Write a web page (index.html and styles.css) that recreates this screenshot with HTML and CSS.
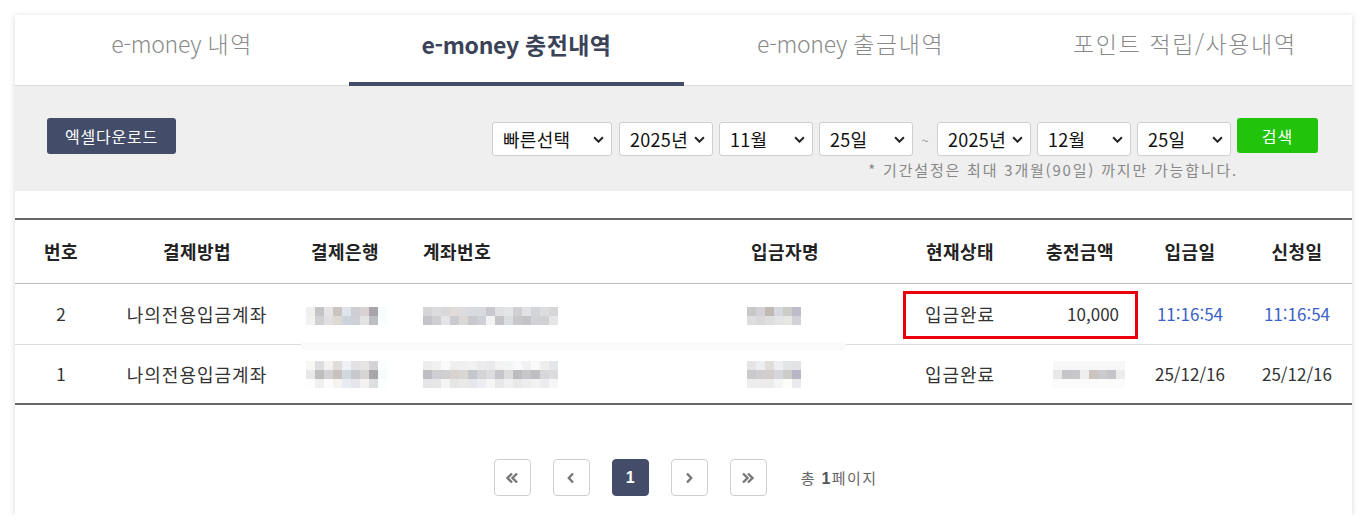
FILE: index.html
```html
<!DOCTYPE html>
<html lang="ko">
<head>
<meta charset="utf-8">
<title>e-money 충전내역</title>
<link rel="stylesheet" href="styles.css">
</head>
<body>
<div class="card">
  <nav class="tabs">
    <a class="tab">e-money <span class="ko">내역</span></a>
    <a class="tab active">e-money <span class="ko">충전내역</span></a>
    <a class="tab">e-money <span class="ko">출금내역</span></a>
    <a class="tab"><span class="ko">포인트 적립/사용내역</span></a>
  </nav>

  <section class="filter">
    <button class="btn-excel">엑셀다운로드</button>
    <div class="filter-right">
      <div class="date-row">
        <span class="sel w120"><select><option>빠른선택</option></select><svg class="chev" viewBox="0 0 10 6"><path d="M1 1l4 4 4-4" fill="none" stroke="#222" stroke-width="1.8"/></svg></span>
        <span class="sel"><select><option>2025년</option></select><svg class="chev" viewBox="0 0 10 6"><path d="M1 1l4 4 4-4" fill="none" stroke="#222" stroke-width="1.8"/></svg></span>
        <span class="sel"><select><option>11월</option></select><svg class="chev" viewBox="0 0 10 6"><path d="M1 1l4 4 4-4" fill="none" stroke="#222" stroke-width="1.8"/></svg></span>
        <span class="sel"><select><option>25일</option></select><svg class="chev" viewBox="0 0 10 6"><path d="M1 1l4 4 4-4" fill="none" stroke="#222" stroke-width="1.8"/></svg></span>
        <span class="tilde">~</span>
        <span class="sel"><select><option>2025년</option></select><svg class="chev" viewBox="0 0 10 6"><path d="M1 1l4 4 4-4" fill="none" stroke="#222" stroke-width="1.8"/></svg></span>
        <span class="sel"><select><option>12월</option></select><svg class="chev" viewBox="0 0 10 6"><path d="M1 1l4 4 4-4" fill="none" stroke="#222" stroke-width="1.8"/></svg></span>
        <span class="sel"><select><option>25일</option></select><svg class="chev" viewBox="0 0 10 6"><path d="M1 1l4 4 4-4" fill="none" stroke="#222" stroke-width="1.8"/></svg></span>
        <button class="btn-search">검색</button>
      </div>
      <p class="note">* 기간설정은 최대 3개월(90일) 까지만 가능합니다.</p>
    </div>
  </section>

  <div class="table-wrap">
    <table class="list">
      <colgroup>
        <col class="c1"><col class="c2"><col class="c3"><col class="c4"><col class="c5"><col class="c6"><col class="c7"><col class="c8"><col class="c9">
      </colgroup>
      <thead>
        <tr>
          <th>번호</th><th>결제방법</th><th>결제은행</th><th class="left">계좌번호</th><th>입금자명</th><th class="st">현재상태</th><th class="amt-h">충전금액</th><th>입금일</th><th class="last">신청일</th>
        </tr>
      </thead>
      <tbody>
        <tr>
          <td class="num">2</td>
          <td class="ko">나의전용입금계좌</td>
          <td class="mos-bank">
            <svg width="81" height="18" viewBox="0 0 81 18"><g>
              <rect x="0" y="0" width="9" height="9" fill="#f0efee"/><rect x="9" y="0" width="9" height="9" fill="#c4c3c6"/><rect x="18" y="0" width="9" height="9" fill="#e4e4e6"/><rect x="27" y="0" width="9" height="9" fill="#c9c4c0"/><rect x="36" y="0" width="9" height="9" fill="#dfe4ec"/><rect x="45" y="0" width="9" height="9" fill="#cdcdd2"/><rect x="54" y="0" width="9" height="9" fill="#d6d3d2"/><rect x="63" y="0" width="9" height="9" fill="#a9a4ab"/><rect x="72" y="0" width="9" height="9" fill="#f7fdfd"/>
              <rect x="0" y="9" width="9" height="9" fill="#f2f2f2"/><rect x="9" y="9" width="9" height="9" fill="#d0cfd1"/><rect x="18" y="9" width="9" height="9" fill="#e0e0e2"/><rect x="27" y="9" width="9" height="9" fill="#ddd8d0"/><rect x="36" y="9" width="9" height="9" fill="#ccd3dc"/><rect x="45" y="9" width="9" height="9" fill="#cfd0d5"/><rect x="54" y="9" width="9" height="9" fill="#e4e3e3"/><rect x="63" y="9" width="9" height="9" fill="#bebdc2"/><rect x="72" y="9" width="9" height="9" fill="#f8fdfd"/>
            </g></svg>
          </td>
          <td class="left mos-acc">
            <svg width="135" height="18" viewBox="0 0 135 18"><g>
              <rect x="0" y="0" width="9" height="9" fill="#d6d6d8"/><rect x="9" y="0" width="9" height="9" fill="#dcdcde"/><rect x="18" y="0" width="9" height="9" fill="#d8d8da"/><rect x="27" y="0" width="9" height="9" fill="#e1dcd9"/><rect x="36" y="0" width="9" height="9" fill="#dcdcde"/><rect x="45" y="0" width="9" height="9" fill="#d8dadd"/><rect x="54" y="0" width="9" height="9" fill="#d9dadd"/><rect x="63" y="0" width="9" height="9" fill="#c9c9cd"/><rect x="72" y="0" width="9" height="9" fill="#dfe0e2"/><rect x="81" y="0" width="9" height="9" fill="#e3e5e6"/><rect x="90" y="0" width="9" height="9" fill="#d0d0d3"/><rect x="99" y="0" width="9" height="9" fill="#e1e2e5"/><rect x="108" y="0" width="9" height="9" fill="#d3d4d7"/><rect x="117" y="0" width="9" height="9" fill="#dcdddf"/><rect x="126" y="0" width="9" height="9" fill="#d6d6d8"/>
              <rect x="0" y="9" width="9" height="9" fill="#c4c3c8"/><rect x="9" y="9" width="9" height="9" fill="#cfced2"/><rect x="18" y="9" width="9" height="9" fill="#e4e4e6"/><rect x="27" y="9" width="9" height="9" fill="#cbcbcf"/><rect x="36" y="9" width="9" height="9" fill="#dcd8d6"/><rect x="45" y="9" width="9" height="9" fill="#c8c8cd"/><rect x="54" y="9" width="9" height="9" fill="#cfd0d5"/><rect x="63" y="9" width="9" height="9" fill="#f3f3f3"/><rect x="72" y="9" width="9" height="9" fill="#c4c4c8"/><rect x="81" y="9" width="9" height="9" fill="#dcdde0"/><rect x="90" y="9" width="9" height="9" fill="#c9c9cc"/><rect x="99" y="9" width="9" height="9" fill="#c3c3c8"/><rect x="108" y="9" width="9" height="9" fill="#d1d2d6"/><rect x="117" y="9" width="9" height="9" fill="#d1d1d4"/><rect x="126" y="9" width="9" height="9" fill="#e5e5e7"/>
            </g></svg>
          </td>
          <td class="mos-name">
            <svg width="54" height="18" viewBox="0 0 54 18"><g>
              <rect x="0" y="0" width="9" height="9" fill="#cac7c8"/><rect x="9" y="0" width="9" height="9" fill="#d2d2d6"/><rect x="18" y="0" width="9" height="9" fill="#bfb8b3"/><rect x="27" y="0" width="9" height="9" fill="#d5d9df"/><rect x="36" y="0" width="9" height="9" fill="#cbccc8"/><rect x="45" y="0" width="9" height="9" fill="#bebcc8"/>
              <rect x="0" y="9" width="9" height="9" fill="#dededf"/><rect x="9" y="9" width="9" height="9" fill="#d9d9dc"/><rect x="18" y="9" width="9" height="9" fill="#e0dedd"/><rect x="27" y="9" width="9" height="9" fill="#e2e3e5"/><rect x="36" y="9" width="9" height="9" fill="#e6e6e3"/><rect x="45" y="9" width="9" height="9" fill="#d3d2d8"/>
            </g></svg>
          </td>
          <td class="st ko">입금완료</td>
          <td class="amt num">10,000</td>
          <td class="time num">11:16:54</td>
          <td class="time num last">11:16:54</td>
        </tr>
        <tr>
          <td class="num">1</td>
          <td class="ko">나의전용입금계좌</td>
          <td class="mos-bank">
            <svg width="81" height="27" viewBox="0 0 81 27"><g>
              <rect x="0" y="0" width="9" height="9" fill="#f8f6f4"/><rect x="9" y="0" width="9" height="9" fill="#dedee0"/><rect x="18" y="0" width="9" height="9" fill="#f2f2f3"/><rect x="27" y="0" width="9" height="9" fill="#e2dcd8"/><rect x="36" y="0" width="9" height="9" fill="#eef1f6"/><rect x="45" y="0" width="9" height="9" fill="#e2e2e6"/><rect x="54" y="0" width="9" height="9" fill="#e8e6e5"/><rect x="63" y="0" width="9" height="9" fill="#d5d2d8"/><rect x="72" y="0" width="9" height="9" fill="#f8fdfd"/>
              <rect x="0" y="9" width="9" height="9" fill="#e8e8e8"/><rect x="9" y="9" width="9" height="9" fill="#bebdc0"/><rect x="18" y="9" width="9" height="9" fill="#d2d2d4"/><rect x="27" y="9" width="9" height="9" fill="#c9c1bd"/><rect x="36" y="9" width="9" height="9" fill="#d2d8e0"/><rect x="45" y="9" width="9" height="9" fill="#c7c8cd"/><rect x="54" y="9" width="9" height="9" fill="#d7d5d4"/><rect x="63" y="9" width="9" height="9" fill="#a9a6ab"/><rect x="72" y="9" width="9" height="9" fill="#f6fcfc"/>
              <rect x="0" y="18" width="9" height="9" fill="#fdfdfd"/><rect x="9" y="18" width="9" height="9" fill="#f0f0f1"/><rect x="18" y="18" width="9" height="9" fill="#fbfbfb"/><rect x="27" y="18" width="9" height="9" fill="#f6f2ef"/><rect x="36" y="18" width="9" height="9" fill="#e8ecf2"/><rect x="45" y="18" width="9" height="9" fill="#e6e6ea"/><rect x="54" y="18" width="9" height="9" fill="#f3f2f1"/><rect x="63" y="18" width="9" height="9" fill="#dedde0"/><rect x="72" y="18" width="9" height="9" fill="#fafefe"/>
            </g></svg>
          </td>
          <td class="left mos-acc">
            <svg width="135" height="27" viewBox="0 0 135 27"><g>
              <rect x="0" y="0" width="9" height="9" fill="#ededee"/><rect x="9" y="0" width="9" height="9" fill="#f1f1f2"/><rect x="18" y="0" width="9" height="9" fill="#fafafa"/><rect x="27" y="0" width="9" height="9" fill="#efefef"/><rect x="36" y="0" width="9" height="9" fill="#f0f0f1"/><rect x="45" y="0" width="9" height="9" fill="#f1f1f2"/><rect x="54" y="0" width="9" height="9" fill="#ebebec"/><rect x="63" y="0" width="9" height="9" fill="#e9e9eb"/><rect x="72" y="0" width="9" height="9" fill="#f3f3f4"/><rect x="81" y="0" width="9" height="9" fill="#f4f6f6"/><rect x="90" y="0" width="9" height="9" fill="#f9f9f9"/><rect x="99" y="0" width="9" height="9" fill="#f1f1f3"/><rect x="108" y="0" width="9" height="9" fill="#fafafa"/><rect x="117" y="0" width="9" height="9" fill="#f0eeec"/><rect x="126" y="0" width="9" height="9" fill="#e5e6e9"/>
              <rect x="0" y="9" width="9" height="9" fill="#bebdc2"/><rect x="9" y="9" width="9" height="9" fill="#cfced2"/><rect x="18" y="9" width="9" height="9" fill="#cfcfd2"/><rect x="27" y="9" width="9" height="9" fill="#d8d3d0"/><rect x="36" y="9" width="9" height="9" fill="#d9d6d4"/><rect x="45" y="9" width="9" height="9" fill="#c3c6cb"/><rect x="54" y="9" width="9" height="9" fill="#d3d3d8"/><rect x="63" y="9" width="9" height="9" fill="#dcdce0"/><rect x="72" y="9" width="9" height="9" fill="#c6c6ca"/><rect x="81" y="9" width="9" height="9" fill="#dcdcdc"/><rect x="90" y="9" width="9" height="9" fill="#bdbcc0"/><rect x="99" y="9" width="9" height="9" fill="#c6c6cb"/><rect x="108" y="9" width="9" height="9" fill="#bebec3"/><rect x="117" y="9" width="9" height="9" fill="#d7d7d9"/><rect x="126" y="9" width="9" height="9" fill="#dcdcde"/>
              <rect x="0" y="18" width="9" height="9" fill="#e5e5e7"/><rect x="9" y="18" width="9" height="9" fill="#e6e6e7"/><rect x="18" y="18" width="9" height="9" fill="#f4f4f4"/><rect x="27" y="18" width="9" height="9" fill="#e8e6e4"/><rect x="36" y="18" width="9" height="9" fill="#ebe9e8"/><rect x="45" y="18" width="9" height="9" fill="#e5e7ea"/><rect x="54" y="18" width="9" height="9" fill="#ecedf0"/><rect x="63" y="18" width="9" height="9" fill="#f5f5f5"/><rect x="72" y="18" width="9" height="9" fill="#e8e8ea"/><rect x="81" y="18" width="9" height="9" fill="#f0f0f2"/><rect x="90" y="18" width="9" height="9" fill="#ebe9e8"/><rect x="99" y="18" width="9" height="9" fill="#ecedef"/><rect x="108" y="18" width="9" height="9" fill="#f3f2f2"/><rect x="117" y="18" width="9" height="9" fill="#ececee"/><rect x="126" y="18" width="9" height="9" fill="#f6f6f6"/>
            </g></svg>
          </td>
          <td class="mos-name">
            <svg width="54" height="27" viewBox="0 0 54 27"><g>
              <rect x="0" y="0" width="9" height="9" fill="#e5e5e6"/><rect x="9" y="0" width="9" height="9" fill="#eceef1"/><rect x="18" y="0" width="9" height="9" fill="#e1dcda"/><rect x="27" y="0" width="9" height="9" fill="#eceef1"/><rect x="36" y="0" width="9" height="9" fill="#e3e4e4"/><rect x="45" y="0" width="9" height="9" fill="#e3e2e6"/>
              <rect x="0" y="9" width="9" height="9" fill="#cbc9ca"/><rect x="9" y="9" width="9" height="9" fill="#cecdd0"/><rect x="18" y="9" width="9" height="9" fill="#d3ccc8"/><rect x="27" y="9" width="9" height="9" fill="#d3d7dc"/><rect x="36" y="9" width="9" height="9" fill="#cccdc8"/><rect x="45" y="9" width="9" height="9" fill="#b8b6c4"/>
              <rect x="0" y="18" width="9" height="9" fill="#ededed"/><rect x="9" y="18" width="9" height="9" fill="#ececee"/><rect x="18" y="18" width="9" height="9" fill="#eeecea"/><rect x="27" y="18" width="9" height="9" fill="#f3f5f7"/><rect x="36" y="18" width="9" height="9" fill="#fdfdf8"/><rect x="45" y="18" width="9" height="9" fill="#eaeaee"/>
            </g></svg>
          </td>
          <td class="st ko">입금완료</td>
          <td class="amt mos-amt">
            <svg width="72" height="27" viewBox="0 0 72 27"><g>
              <rect x="0" y="0" width="72" height="27" fill="#f7f7f7"/>
              <rect x="0" y="9" width="9" height="9" fill="#e8e8e9"/><rect x="9" y="9" width="9" height="9" fill="#c6c6c9"/><rect x="18" y="9" width="9" height="9" fill="#c8c8cb"/><rect x="27" y="9" width="9" height="9" fill="#eeeeee"/><rect x="36" y="9" width="9" height="9" fill="#ccc4c1"/><rect x="45" y="9" width="9" height="9" fill="#cbcbcd"/><rect x="54" y="9" width="9" height="9" fill="#c5c5c9"/><rect x="63" y="9" width="9" height="9" fill="#ececed"/>
              <rect x="0" y="18" width="72" height="9" fill="#fbfbfb"/>
            </g></svg>
          </td>
          <td class="num">25/12/16</td>
          <td class="num last">25/12/16</td>
        </tr>
      </tbody>
    </table>
    <div class="mask-strip"></div>
    <div class="highlight"></div>
  </div>

  <div class="pager">
    <a class="pg"><svg viewBox="0 0 14 12" width="14" height="12"><path d="M7 1.5L2.5 6 7 10.5M12 1.5L7.5 6 12 10.5" fill="none" stroke="#777" stroke-width="2.4"/></svg></a>
    <a class="pg"><svg viewBox="0 0 8 12" width="8" height="12"><path d="M6 1.5L1.8 6 6 10.5" fill="none" stroke="#777" stroke-width="2.4"/></svg></a>
    <a class="pg on">1</a>
    <a class="pg"><svg viewBox="0 0 8 12" width="8" height="12"><path d="M2 1.5L6.2 6 2 10.5" fill="none" stroke="#777" stroke-width="2.4"/></svg></a>
    <a class="pg"><svg viewBox="0 0 14 12" width="14" height="12"><path d="M2 1.5L6.5 6 2 10.5M7 1.5L11.5 6 7 10.5" fill="none" stroke="#777" stroke-width="2.4"/></svg></a>
    <span class="total">총 <b>1</b>페이지</span>
  </div>
</div>
</body>
</html>
```

FILE: styles.css
```css
* { box-sizing: border-box; }
html, body { margin: 0; padding: 0; background: #fff; }
body {
  font-family: "Noto Sans CJK KR", "Noto Sans", sans-serif;
  color: #333;
}

.card {
  margin: 15px 15px 0 15px;
  width: 1337px;
  background: #fff;
  box-shadow: 0 1px 6px rgba(0, 0, 0, 0.16);
  padding-bottom: 19px;
}

/* tabs */
.tabs {
  display: grid;
  grid-template-columns: repeat(4, 1fr);
  height: 71px;
  border-bottom: 1px solid #dcdcdc;
}
.tab {
  display: flex;
  align-items: center;
  justify-content: center;
  padding-bottom: 14px;
  font-size: 23px;
  font-weight: 300;
  color: #8a8a8a;
  letter-spacing: -0.3px;
  white-space: pre;
}
.tab .ko { letter-spacing: 1.6px; }
.tab.active {
  color: #3b4358;
  font-weight: 700;
  box-shadow: inset 0 -4px 0 #434d69;
  margin-bottom: -1px;
}
.tab.active .ko { letter-spacing: 0.4px; }

/* filter */
.filter {
  background: #efefef;
  height: 105px;
  display: flex;
  justify-content: space-between;
  align-items: flex-start;
  padding: 32px 34px 0 32px;
}
.btn-excel {
  width: 129px;
  height: 36px;
  border: 0;
  border-radius: 3px;
  background: #434d69;
  color: #fff;
  font-family: inherit;
  font-size: 16px;
  letter-spacing: 0.8px;
  padding: 0;
}
.filter-right {
  display: flex;
  flex-direction: column;
  align-items: flex-end;
}
.date-row {
  display: flex;
  align-items: flex-start;
  gap: 6px;
}
.sel {
  position: relative;
  display: block;
  flex: 0 0 94px;
  width: 94px;
  height: 34px;
  margin-top: 4px;
}
.sel.w120 { flex-basis: 120px; width: 120px; margin-right: 1px; }
.sel select {
  appearance: none;
  -webkit-appearance: none;
  width: 100%;
  height: 100%;
  border: 1px solid #cfcfcf;
  border-radius: 3px;
  background: #fff;
  font-family: "Noto Sans CJK KR", sans-serif;
  font-size: 18px;
  color: #111;
  padding: 0 0 0 10px;
  letter-spacing: 0.3px;
}
.chev {
  position: absolute;
  right: 8px;
  top: 14px;
  width: 11px;
  height: 7px;
  pointer-events: none;
}
.tilde {
  flex: 0 0 12px;
  text-align: center;
  color: #999;
  font-size: 13px;
  margin-top: 13px;
}
.btn-search {
  flex: 0 0 81px;
  width: 81px;
  height: 35px;
  border: 0;
  border-radius: 3px;
  background: #21c30b;
  color: #fff;
  font-family: inherit;
  font-size: 16px;
  letter-spacing: 1px;
  padding: 0;
}
.note {
  margin: 4px 80px 0 0;
  font-size: 15px;
  color: #888;
  letter-spacing: 1.8px;
  line-height: 20px;
}

/* table */
.table-wrap {
  position: relative;
  margin-top: 27px;
}
.list {
  width: 100%;
  border-collapse: collapse;
  table-layout: fixed;
  border-top: 2px solid #666;
  border-bottom: 2px solid #666;
}
.c1 { width: 92px; } .c2 { width: 180px; } .c3 { width: 116px; } .c4 { width: 297px; }
.c5 { width: 170px; } .c6 { width: 170px; } .c7 { width: 90px; } .c8 { width: 120px; } .c9 { width: 102px; }
.list th {
  height: 64px;
  font-size: 18px;
  font-weight: 700;
  color: #222;
  text-align: center;
  border-bottom: 1px solid #bbb;
  padding: 0;
  letter-spacing: 0.5px;
}
.list td {
  height: 61px;
  font-size: 17px;
  color: #333;
  text-align: center;
  padding: 0;
  border-bottom: 1px solid #dcdcdc;
}
.list td.ko { font-size: 18px; letter-spacing: 1px; }
.list tbody tr:last-child td { border-bottom: 0; height: 60px; }
.list th.left, .list td.left { text-align: left; padding-left: 20px; }
.list .st { padding-left: 10px; }
.list th.amt-h { padding-right: 10px; }
.list td.amt { text-align: right; padding-right: 11px; }
.list .last { padding-right: 8px; }
.list td.time { color: #3a62c9; }
.list svg { display: inline-block; vertical-align: middle; }
.list td.mos-bank { padding-left: 19px; text-align: left; }
.list td.mos-acc svg { margin-left: 0; }
.list td.mos-name { padding-right: 22px; }
.list td.mos-amt { padding-right: 5px; }

.mask-strip {
  position: absolute;
  left: 286px;
  top: 124px;
  width: 545px;
  height: 8px;
  background: #fafafa;
}
.highlight {
  position: absolute;
  left: 888px;
  top: 73px;
  width: 235px;
  height: 48px;
  border: 3px solid #e8000b;
}

/* pager */
.pager {
  display: flex;
  align-items: center;
  justify-content: center;
  margin-top: 54px;
  padding-left: 4px;
  gap: 22px;
}
.pg {
  width: 37px;
  height: 37px;
  border: 1px solid #cfcfcf;
  border-radius: 4px;
  display: flex;
  align-items: center;
  justify-content: center;
  background: #fff;
  font-family: "Liberation Sans", Arial, sans-serif;
  font-size: 16px;
  font-weight: 700;
}
.pg.on {
  background: #434d69;
  border-color: #434d69;
  color: #fff;
}
.total {
  margin-left: 12px;
  font-size: 15px;
  color: #666;
  letter-spacing: 1.4px;
}
.total b { color: #555; font-family: "Liberation Sans", Arial, sans-serif; font-size: 16px; }
```
